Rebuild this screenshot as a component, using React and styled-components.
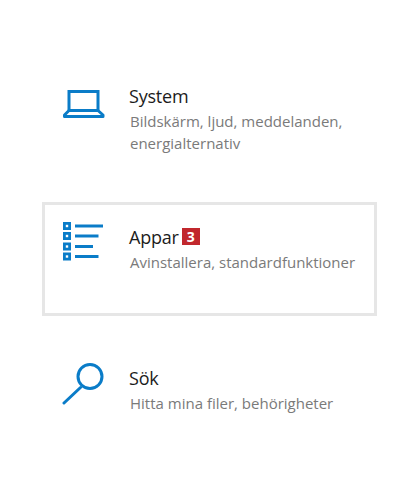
import React from 'react';
import styled, { createGlobalStyle } from 'styled-components';

const Global = createGlobalStyle`
  html, body {
    background: #fff;
    margin: 0;
    padding: 0;
  }
`;

const Page = styled.main`
  box-sizing: border-box;
  display: flex;
  flex-direction: column;
  font-family: "Open Sans", "Noto Sans", "Liberation Sans", sans-serif;
  gap: 27px;
  height: 488px;
  padding: 61px 41px 0 42px;
  width: 418px;
`;

const Item = styled.section`
  border: 3px solid ${({ $selected }) => ($selected ? '#e6e6e6' : 'transparent')};
  box-sizing: border-box;
  display: flex;
  height: 114px;
  padding: 16px 0 0 17px;
`;

const IconBox = styled.div`
  flex: 0 0 44px;
  height: 44px;
  margin-right: 24px;

  svg {
    display: block;
  }
`;

const Body = styled.div`
  display: flex;
  flex-direction: column;
  min-width: 0;
`;

const TitleRow = styled.div`
  align-items: center;
  display: flex;
  gap: 3px;
  height: 31px;
  margin-bottom: -1px;
  margin-left: -1px;
`;

const Title = styled.h2`
  color: #1c1c1c;
  font-size: 18px;
  font-weight: 400;
  letter-spacing: -0.2px;
  margin: 0;
`;

const Badge = styled.span`
  align-items: center;
  background: #c1272d;
  color: #fff;
  display: flex;
  font-size: 14px;
  font-weight: 700;
  height: 17px;
  justify-content: center;
  margin-top: -1px;
  width: 18px;
`;

const Description = styled.p`
  color: #7a7a7a;
  font-size: 15px;
  line-height: 22px;
  margin: 0;
  width: 228px;
`;

const LaptopIcon = () => (
  <svg width="44" height="44" viewBox="0 0 44 44" fill="none" stroke="#0a7cc8" strokeWidth="3">
    <path d="M7 30.5V11.5H36V30.5" />
    <path d="M7 30.5H36L41 35V36.5H2.5V35Z" strokeLinejoin="round" />
  </svg>
);

const rows = [
  { y: 5, end: 41 },
  { y: 15, end: 36.5 },
  { y: 25.5, end: 31 },
  { y: 35.5, end: 36.5 },
];

const ListIcon = () => (
  <svg width="44" height="44" viewBox="0 0 44 44" fill="none">
    {rows.map(({ y, end }) => (
      <g key={y}>
        <rect x="1" y={y - 4} width="8" height="8" fill="#0a7cc8" />
        <rect x="3.8" y={y - 1.2} width="2.4" height="2.4" fill="#fff" />
        <path d={`M13 ${y}H${end}`} stroke="#0a7cc8" strokeWidth="3" />
      </g>
    ))}
  </svg>
);

const SearchIcon = () => (
  <svg width="44" height="44" viewBox="0 0 44 44" fill="none" stroke="#0a7cc8" strokeWidth="3">
    <circle cx="28" cy="14.5" r="12" />
    <path d="M18.5 25.5L2 41" strokeLinecap="round" />
  </svg>
);

const items = [
  {
    title: 'System',
    description: 'Bildskärm, ljud, meddelanden, energialternativ',
    Icon: LaptopIcon,
  },
  {
    title: 'Appar',
    description: 'Avinstallera, standardfunktioner',
    Icon: ListIcon,
    badge: 3,
    selected: true,
  },
  {
    title: 'Sök',
    description: 'Hitta mina filer, behörigheter',
    Icon: SearchIcon,
  },
];

const App = () => (
  <>
    <Global />
    <Page>
      {items.map(({ title, description, Icon, badge, selected }) => (
        <Item key={title} $selected={selected}>
          <IconBox>
            <Icon />
          </IconBox>
          <Body>
            <TitleRow>
              <Title>{title}</Title>
              {badge && <Badge>{badge}</Badge>}
            </TitleRow>
            <Description>{description}</Description>
          </Body>
        </Item>
      ))}
    </Page>
  </>
);

export default App;
